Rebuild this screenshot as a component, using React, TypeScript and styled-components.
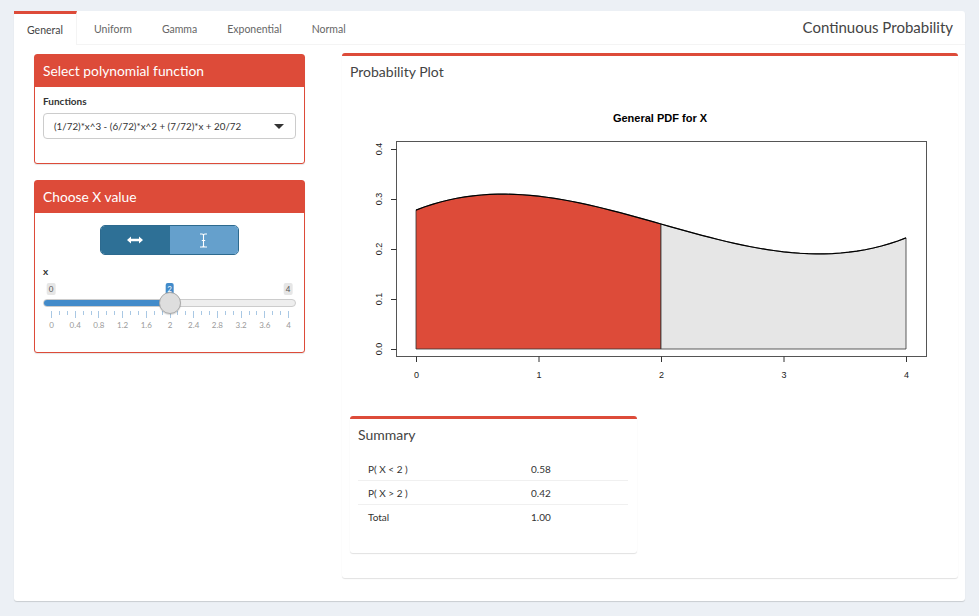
import React from 'react'
import styled, { createGlobalStyle, css } from 'styled-components'

const RED = '#dd4b39'
const BLUE = '#428bca'

const GlobalStyle = createGlobalStyle`
    * { box-sizing: border-box; }
    html, body {
        margin: 0;
        padding: 0;
        background: #ecf0f5;
        font-family: Lato, 'Open Sans', sans-serif;
        color: #333;
    }
`

const Page = styled.div`
    padding: 11px 14px 15px 14px;
    height: 616px;
`

const TabBox = styled.div`
    background: #fff;
    height: 590px;
    border-radius: 3px;
    box-shadow: 0 1px 1px rgba(0, 0, 0, 0.15);
    display: flex;
    flex-direction: column;
`

const NavBar = styled.div`
    display: flex;
    align-items: stretch;
    height: 34px;
    border-bottom: 1px solid #f4f4f4;
`

const Tab = styled.div<{ $active?: boolean }>`
    display: flex;
    align-items: center;
    padding: 0 13px;
    margin-right: 4px;
    font-size: 10.5px;
    color: #666;
    border-top: 3px solid transparent;
    ${({ $active }) =>
        $active &&
        css`
            border-top-color: ${RED};
            border-right: 1px solid #f4f4f4;
            color: #444;
            background: #fff;
            margin-bottom: -1px;
        `}
`

const NavTitle = styled.div`
    margin-left: auto;
    padding: 0 12px 2px 0;
    display: flex;
    align-items: center;
    font-size: 15px;
    color: #444;
`

const Content = styled.div`
    flex: 1;
    display: flex;
    gap: 37px;
    padding: 8px 7px 0 20px;
`

const LeftCol = styled.div`
    width: 271px;
    display: flex;
    flex-direction: column;
    gap: 16px;
    padding-top: 1px;
`

const SolidBox = styled.div`
    border: 1px solid ${RED};
    border-radius: 3px;
    background: #fff;
    box-shadow: 0 1px 1px rgba(0, 0, 0, 0.1);
`

const SolidHeader = styled.div`
    background: ${RED};
    color: #fff;
    height: 32px;
    display: flex;
    align-items: center;
    padding: 0 9px 1px 8px;
    font-size: 13.8px;
`

const BoxBody = styled.div<{ $bottom?: number }>`
    padding: 8px 8px ${({ $bottom }) => $bottom ?? 24}px 8px;
`

const Label = styled.div`
    font-size: 10px;
    font-weight: 700;
    color: #333;
    margin-bottom: 6px;
`

const Select = styled.div`
    height: 26px;
    border: 1px solid #ccc;
    border-radius: 4px;
    display: flex;
    align-items: center;
    padding: 0 11px 0 10px;
    font-size: 9.8px;
    color: #333;
`

const Caret = styled.span`
    margin-left: auto;
    width: 0;
    height: 0;
    border-left: 5px solid transparent;
    border-right: 5px solid transparent;
    border-top: 5px solid #333;
`

const ToggleRow = styled.div`
    display: flex;
    justify-content: center;
    padding-top: 4px;
    margin-bottom: 10px;
`

const Toggle = styled.div`
    display: flex;
    width: 139px;
    height: 30px;
    border: 1px solid #2d6a8f;
    border-radius: 5px;
    overflow: hidden;
`

const ToggleHalf = styled.div<{ $on?: boolean }>`
    flex: 1;
    display: flex;
    align-items: center;
    justify-content: center;
    background: ${({ $on }) => ($on ? '#2e7096' : '#65a0cc')};
`

const SliderWrap = styled.div`
    position: relative;
    height: 48px;
    margin-top: 5px;
`

const Bubble = styled.span<{ $value?: boolean }>`
    position: absolute;
    top: 0;
    transform: translateX(-50%);
    font-size: 8px;
    line-height: 12px;
    padding: 0 2px;
    border-radius: 2px;
    background: ${({ $value }) => ($value ? BLUE : '#e6e6e6')};
    color: ${({ $value }) => ($value ? '#fff' : '#555')};
`

const Track = styled.div`
    position: absolute;
    left: 0;
    right: 0;
    top: 16px;
    height: 8px;
    border-radius: 4px;
    background: #eee;
    border: 1px solid #ccc;
    overflow: hidden;
`

const Fill = styled.div`
    height: 100%;
    background: ${BLUE};
`

const Handle = styled.div`
    position: absolute;
    top: 9px;
    width: 22px;
    height: 22px;
    border-radius: 50%;
    background: #dedede;
    border: 1px solid #aaa;
    transform: translateX(-50%);
    box-shadow: 0 1px 1px rgba(0, 0, 0, 0.15);
`

const Tick = styled.span<{ $big?: boolean }>`
    position: absolute;
    top: 28px;
    width: 1px;
    height: ${({ $big }) => ($big ? '7px' : '4px')};
    background: #a9c8e4;
`

const TickLabel = styled.span`
    position: absolute;
    top: 37px;
    transform: translateX(-50%);
    font-size: 8px;
    color: #999;
`

const RightBox = styled.div`
    width: 616px;
    height: 525px;
    border-top: 3px solid ${RED};
    border-radius: 3px;
    box-shadow: 0 1px 1px rgba(0, 0, 0, 0.12);
    padding: 0 8px;
    display: flex;
    flex-direction: column;
`

const BoxTitle = styled.div`
    font-size: 14px;
    color: #444;
    height: 30px;
    display: flex;
    align-items: center;
`

const SummaryBox = styled.div`
    width: 287px;
    border-top: 3px solid ${RED};
    border-radius: 3px;
    box-shadow: 0 1px 1px rgba(0, 0, 0, 0.12);
    padding: 0 9px 24px 8px;
    margin-top: 22px;
`

const Table = styled.div`
    margin-top: 8px;
`

const Row = styled.div<{ $last?: boolean }>`
    display: grid;
    grid-template-columns: 163px 1fr;
    height: 24px;
    align-items: center;
    padding-left: 10px;
    border-bottom: ${({ $last }) => ($last ? '1px solid transparent' : '1px solid #f0f0f0')};
`

const Cell = styled.span`
    font-family: Lato, 'Open Sans', sans-serif;
    font-size: 10px;
    color: #333;
`

const Plot = styled.svg`
    display: block;
    margin-top: 8px;
`

const f = (x: number) => (x * x * x - 6 * x * x + 7 * x + 20) / 72
const X = (x: number) => 66 + 122.5 * x
const Y = (y: number) => 255 - 500 * y

const curve = (a: number, b: number) => {
    const pts: string[] = []
    const n = 60
    for (let i = 0; i <= n; i++) {
        const x = a + ((b - a) * i) / n
        pts.push(`${X(x).toFixed(2)},${Y(f(x)).toFixed(2)}`)
    }
    return pts
}

const area = (a: number, b: number) =>
    `M${X(a)},${Y(0)} L${curve(a, b).join(' L')} L${X(b)},${Y(0)} Z`

const PdfPlot = () => (
    <Plot width={600} height={300} viewBox="0 0 600 300">
        <text x={310} y={28} textAnchor="middle" fontFamily="'Liberation Sans', Arial, sans-serif" fontWeight={700} fontSize={11} fill="#000">
            General PDF for X
        </text>
        <path d={area(0, 2)} fill={RED} stroke="#333" strokeWidth={0.8} />
        <path d={area(2, 4)} fill="#e6e6e6" stroke="#333" strokeWidth={0.8} />
        <polyline points={curve(0, 4).join(' ')} fill="none" stroke="#000" strokeWidth={1.2} />
        <rect x={46.5} y={47.5} width={530} height={215} fill="none" stroke="#555" strokeWidth={1} />
        {[0, 0.1, 0.2, 0.3, 0.4].map((v) => (
            <g key={v}>
                <line x1={41} x2={46.5} y1={Y(v) + 0.5} y2={Y(v) + 0.5} stroke="#333" />
                <text
                    x={32}
                    y={Y(v)}
                    transform={`rotate(-90 32 ${Y(v)})`}
                    textAnchor="middle"
                    fontFamily="'Liberation Sans', Arial, sans-serif"
                    fontSize={9}
                    fill="#222"
                >
                    {v.toFixed(1)}
                </text>
            </g>
        ))}
        {[0, 1, 2, 3, 4].map((v) => (
            <g key={v}>
                <line x1={X(v) + 0.5} x2={X(v) + 0.5} y1={262.5} y2={268} stroke="#333" />
                <text x={X(v) + 0.5} y={284} textAnchor="middle" fontFamily="'Liberation Sans', Arial, sans-serif" fontSize={9} fill="#222">
                    {v}
                </text>
            </g>
        ))}
    </Plot>
)

const pos = (v: number) => 8 + (237 / 4) * v

const Slider = ({ value }: { value: number }) => {
    const labels = [0, 0.4, 0.8, 1.2, 1.6, 2, 2.4, 2.8, 3.2, 3.6, 4]
    const small: number[] = []
    labels.slice(0, -1).forEach((l) => {
        small.push(l + 0.4 / 3, l + 0.8 / 3)
    })
    return (
        <SliderWrap>
            <Bubble style={{ left: pos(0) }}>0</Bubble>
            <Bubble style={{ left: pos(4) }}>4</Bubble>
            <Bubble $value style={{ left: pos(value) }}>
                {value}
            </Bubble>
            <Track>
                <Fill style={{ width: pos(value) }} />
            </Track>
            {labels.map((l) => (
                <React.Fragment key={l}>
                    <Tick $big style={{ left: pos(l) }} />
                    <TickLabel style={{ left: pos(l) + 0.5 }}>{l}</TickLabel>
                </React.Fragment>
            ))}
            {small.map((s) => (
                <Tick key={s} style={{ left: pos(s) }} />
            ))}
            <Handle style={{ left: pos(value) }} />
        </SliderWrap>
    )
}

const HArrow = () => (
    <svg width="16" height="8" viewBox="0 0 16 8">
        <path d="M0 4 L4 0.5 V2.8 H12 V0.5 L16 4 L12 7.5 V5.2 H4 V7.5 Z" fill="#fff" />
    </svg>
)

const IBeam = () => (
    <svg width="9" height="15" viewBox="0 0 9 15">
        <path d="M1 1 H3 Q4.5 1 4.5 2.5 Q4.5 1 6 1 H8 M4.5 2.5 V12.5 M1 14 H3 Q4.5 14 4.5 12.5 Q4.5 14 6 14 H8 M2.8 7.5 H6.2" stroke="#fff" strokeWidth="1.1" fill="none" />
    </svg>
)

const App = () => {
    const rows = [
        ['P( X < 2 )', '0.58'],
        ['P( X > 2 )', '0.42'],
        ['Total', '1.00'],
    ]
    return (
        <Page>
            <GlobalStyle />
            <TabBox>
                <NavBar>
                    <Tab $active>General</Tab>
                    <Tab>Uniform</Tab>
                    <Tab>Gamma</Tab>
                    <Tab>Exponential</Tab>
                    <Tab>Normal</Tab>
                    <NavTitle>Continuous Probability</NavTitle>
                </NavBar>
                <Content>
                    <LeftCol>
                        <SolidBox>
                            <SolidHeader>Select polynomial function</SolidHeader>
                            <BoxBody>
                                <Label>Functions</Label>
                                <Select>
                                    (1/72)*x^3 - (6/72)*x^2 + (7/72)*x + 20/72
                                    <Caret />
                                </Select>
                            </BoxBody>
                        </SolidBox>
                        <SolidBox>
                            <SolidHeader>Choose X value</SolidHeader>
                            <BoxBody $bottom={21}>
                                <ToggleRow>
                                    <Toggle>
                                        <ToggleHalf $on>
                                            <HArrow />
                                        </ToggleHalf>
                                        <ToggleHalf>
                                            <IBeam />
                                        </ToggleHalf>
                                    </Toggle>
                                </ToggleRow>
                                <Label>x</Label>
                                <Slider value={2} />
                            </BoxBody>
                        </SolidBox>
                    </LeftCol>
                    <RightBox>
                        <BoxTitle>Probability Plot</BoxTitle>
                        <PdfPlot />
                        <SummaryBox>
                            <BoxTitle>Summary</BoxTitle>
                            <Table>
                                {rows.map(([a, b], i) => (
                                    <Row key={a} $last={i === rows.length - 1}>
                                        <Cell>{a}</Cell>
                                        <Cell>{b}</Cell>
                                    </Row>
                                ))}
                            </Table>
                        </SummaryBox>
                    </RightBox>
                </Content>
            </TabBox>
        </Page>
    )
}

export default App
